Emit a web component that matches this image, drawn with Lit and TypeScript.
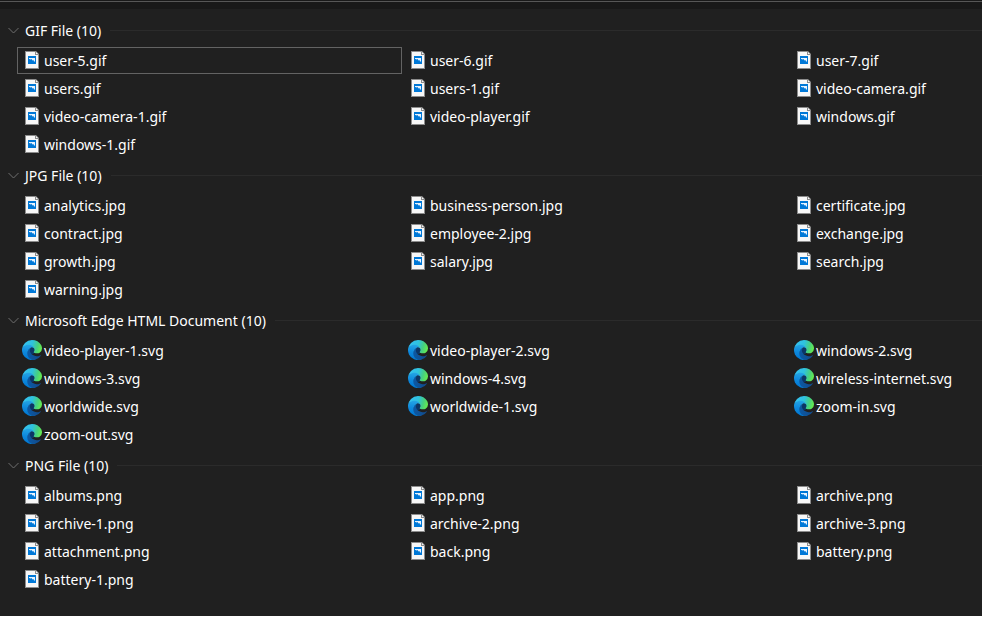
import { LitElement, html, css, svg } from "lit";
import { customElement, state } from "lit/decorators.js";
import { classMap } from "lit/directives/class-map.js";

interface FileGroup {
  name: string;
  icon: "picture" | "edge";
  files: string[];
}

const groups: FileGroup[] = [
  {
    name: "GIF File",
    icon: "picture",
    files: [
      "user-5.gif", "user-6.gif", "user-7.gif", "users.gif", "users-1.gif",
      "video-camera.gif", "video-camera-1.gif", "video-player.gif", "windows.gif", "windows-1.gif",
    ],
  },
  {
    name: "JPG File",
    icon: "picture",
    files: [
      "analytics.jpg", "business-person.jpg", "certificate.jpg", "contract.jpg", "employee-2.jpg",
      "exchange.jpg", "growth.jpg", "salary.jpg", "search.jpg", "warning.jpg",
    ],
  },
  {
    name: "Microsoft Edge HTML Document",
    icon: "edge",
    files: [
      "video-player-1.svg", "video-player-2.svg", "windows-2.svg", "windows-3.svg", "windows-4.svg",
      "wireless-internet.svg", "worldwide.svg", "worldwide-1.svg", "zoom-in.svg", "zoom-out.svg",
    ],
  },
  {
    name: "PNG File",
    icon: "picture",
    files: [
      "albums.png", "app.png", "archive.png", "archive-1.png", "archive-2.png",
      "archive-3.png", "attachment.png", "back.png", "battery.png", "battery-1.png",
    ],
  },
];

const pictureIcon = svg`
  <path d="M3 1H14L17 4V19H3Z" fill="#8c8c8c"/>
  <path d="M4 2H13V5H16V18H4Z" fill="#f7f7f7"/>
  <path d="M14 2L16 4H14Z" fill="#f7f7f7"/>
  <rect x="6" y="6" width="8" height="8" fill="#0078d7"/>
  <path d="M7 8H13V11.500H12L11.500 10L10.500 10.500L9.500 9L8.500 9.500L7.500 9H7Z" fill="#e6f3ff"/>`;

const edgeIcon = svg`
  <defs>
    <linearGradient id="deep" x1="63" y1="178" x2="241" y2="178" gradientUnits="userSpaceOnUse">
      <stop offset="0" stop-color="#0c59a4"/><stop offset="1" stop-color="#114a8b"/>
    </linearGradient>
    <linearGradient id="mid" x1="80" y1="50" x2="60" y2="240" gradientUnits="userSpaceOnUse">
      <stop offset="0" stop-color="#27a9e6"/><stop offset="0.5" stop-color="#108bdd"/><stop offset="1" stop-color="#0078d4"/>
    </linearGradient>
    <linearGradient id="top" x1="10" y1="60" x2="245" y2="130" gradientUnits="userSpaceOnUse">
      <stop offset="0" stop-color="#35c1f1"/><stop offset="0.45" stop-color="#2fc2df"/>
      <stop offset="0.75" stop-color="#46d080"/><stop offset="1" stop-color="#66eb4e"/>
    </linearGradient>
  </defs>
  <ellipse cx="128" cy="142" rx="34" ry="40" fill="#0b3566"/>
  <path fill="url(#deep)" d="M235.68 195.46a93.73 93.73 0 0 1-10.54 4.71 101.87 101.87 0 0 1-35.9 6.46c-47.32 0-88.54-32.55-88.54-74.32A31.48 31.48 0 0 1 117.13 105c-42.8 1.8-53.8 46.4-53.8 72.53 0 73.88 68.09 78.47 82.76 78.47 7.91 0 19.84-2.3 27-4.56l1.31-.44a128.34 128.34 0 0 0 66.6-49.9 4 4 0 0 0-5.32-5.64Z"/>
  <path fill="url(#mid)" d="M105.73 241.42A79.2 79.2 0 0 1 83 220.08a80.72 80.72 0 0 1 29.5-120c3.12-1.47 8.45-4.13 15.54-4a32.35 32.35 0 0 1 25.69 13 31.88 31.88 0 0 1 6.36 18.66c0-.21 24.46-79.6-80-79.6C36.19 48.14 0 89.8 0 126.35A130.15 130.15 0 0 0 12.11 184a128 128 0 0 0 156.38 65.5 75.55 75.55 0 0 1-62.76-8.08Z"/>
  <path fill="url(#top)" d="M152.33 148.86c-.81 1.05-3.3 2.5-3.3 5.66 0 2.61 1.7 5.12 4.72 7.23 14.38 10 41.49 8.68 41.56 8.68a59.56 59.56 0 0 0 30.27-8.35A61.38 61.38 0 0 0 256 109.2c.26-22.41-8-37.31-11.34-43.91C223.46 23.84 177.72 0 128 0A128 128 0 0 0 0 126.2C.48 89.66 36.8 60.16 80 60.16c3.5 0 23.46.34 42 10.07 16.34 8.58 24.9 18.94 30.85 29.21 6.18 10.67 7.28 24.15 7.28 29.52s-2.74 13.33-7.8 19.9Z"/>`;

@customElement("app-root")
export class AppRoot extends LitElement {
  @state() private focused = "user-5.gif";
  @state() private collapsed: string[] = [];

  static styles = css`
    :host {
      display: block;
      background: #202020;
      color: #fff;
      font: 14px/20px "Noto Sans", "Open Sans", sans-serif;
      overflow: hidden;
    }
    .edge {
      height: 7px;
      margin-bottom: 5px;
      border-top: 1px solid #575757;
      background: #191919;
    }
    .top {
      height: 1px;
      background: #191919;
    }
    main {
      padding-bottom: 22px;
    }
    button {
      padding: 0;
      border: 0;
      background: none;
      color: inherit;
      font: inherit;
      text-align: left;
    }
    h2 {
      margin: 0;
      font: inherit;
    }
    .header {
      display: flex;
      align-items: center;
      width: 100%;
      height: 33px;
      padding-left: 8px;
    }
    .chevron {
      width: 11px;
      height: 7px;
      margin-right: 6px;
      fill: none;
      stroke: #6e6e6e;
    }
    .closed .chevron {
      transform: rotate(-90deg);
    }
    .rule {
      flex: 1;
      height: 1px;
      margin-left: 9px;
      background: #2b2b2b;
    }
    .files {
      display: grid;
      grid-template-columns: repeat(3, 40%);
      grid-auto-rows: 28px;
      margin: 0 0 0 17px;
      padding: 0;
      list-style: none;
    }
    .files li {
      display: flex;
      padding: 0 1px 1px 0;
    }
    .file {
      display: flex;
      align-items: center;
      gap: 2px;
      flex: 1;
      padding-left: 4px;
      border: 1px solid transparent;
      outline: none;
      white-space: nowrap;
    }
    .focused {
      border-color: #636363;
    }
    .icon {
      flex: none;
      width: 20px;
      height: 20px;
      margin-bottom: 1px;
    }
  `;

  private toggle(name: string) {
    this.collapsed = this.collapsed.includes(name)
      ? this.collapsed.filter((n) => n !== name)
      : [...this.collapsed, name];
  }

  private renderFile(file: string, icon: FileGroup["icon"]) {
    return html`<li>
      <button
        class=${classMap({ file: true, focused: file === this.focused })}
        @click=${() => (this.focused = file)}
      >
        <svg class="icon" viewBox=${icon === "edge" ? "0 0 256 256" : "0 0 20 20"} aria-hidden="true">
          ${icon === "edge" ? edgeIcon : pictureIcon}
        </svg>
        <span>${file}</span>
      </button>
    </li>`;
  }

  render() {
    return html`
      <div class="top"></div>
      <div class="edge"></div>
      <main>
        ${groups.map((group) => {
          const closed = this.collapsed.includes(group.name);
          return html`<section>
            <h2>
              <button
                class=${classMap({ header: true, closed })}
                aria-expanded=${closed ? "false" : "true"}
                @click=${() => this.toggle(group.name)}
              >
                <svg class="chevron" viewBox="0 0 11 7" aria-hidden="true"><path d="M.5 1L5.5 6L10.5 1"/></svg>
                <span>${group.name} (${group.files.length})</span>
                <span class="rule"></span>
              </button>
            </h2>
            ${closed
              ? null
              : html`<ul class="files">
                  ${group.files.map((file) => this.renderFile(file, group.icon))}
                </ul>`}
          </section>`;
        })}
      </main>
    `;
  }
}
